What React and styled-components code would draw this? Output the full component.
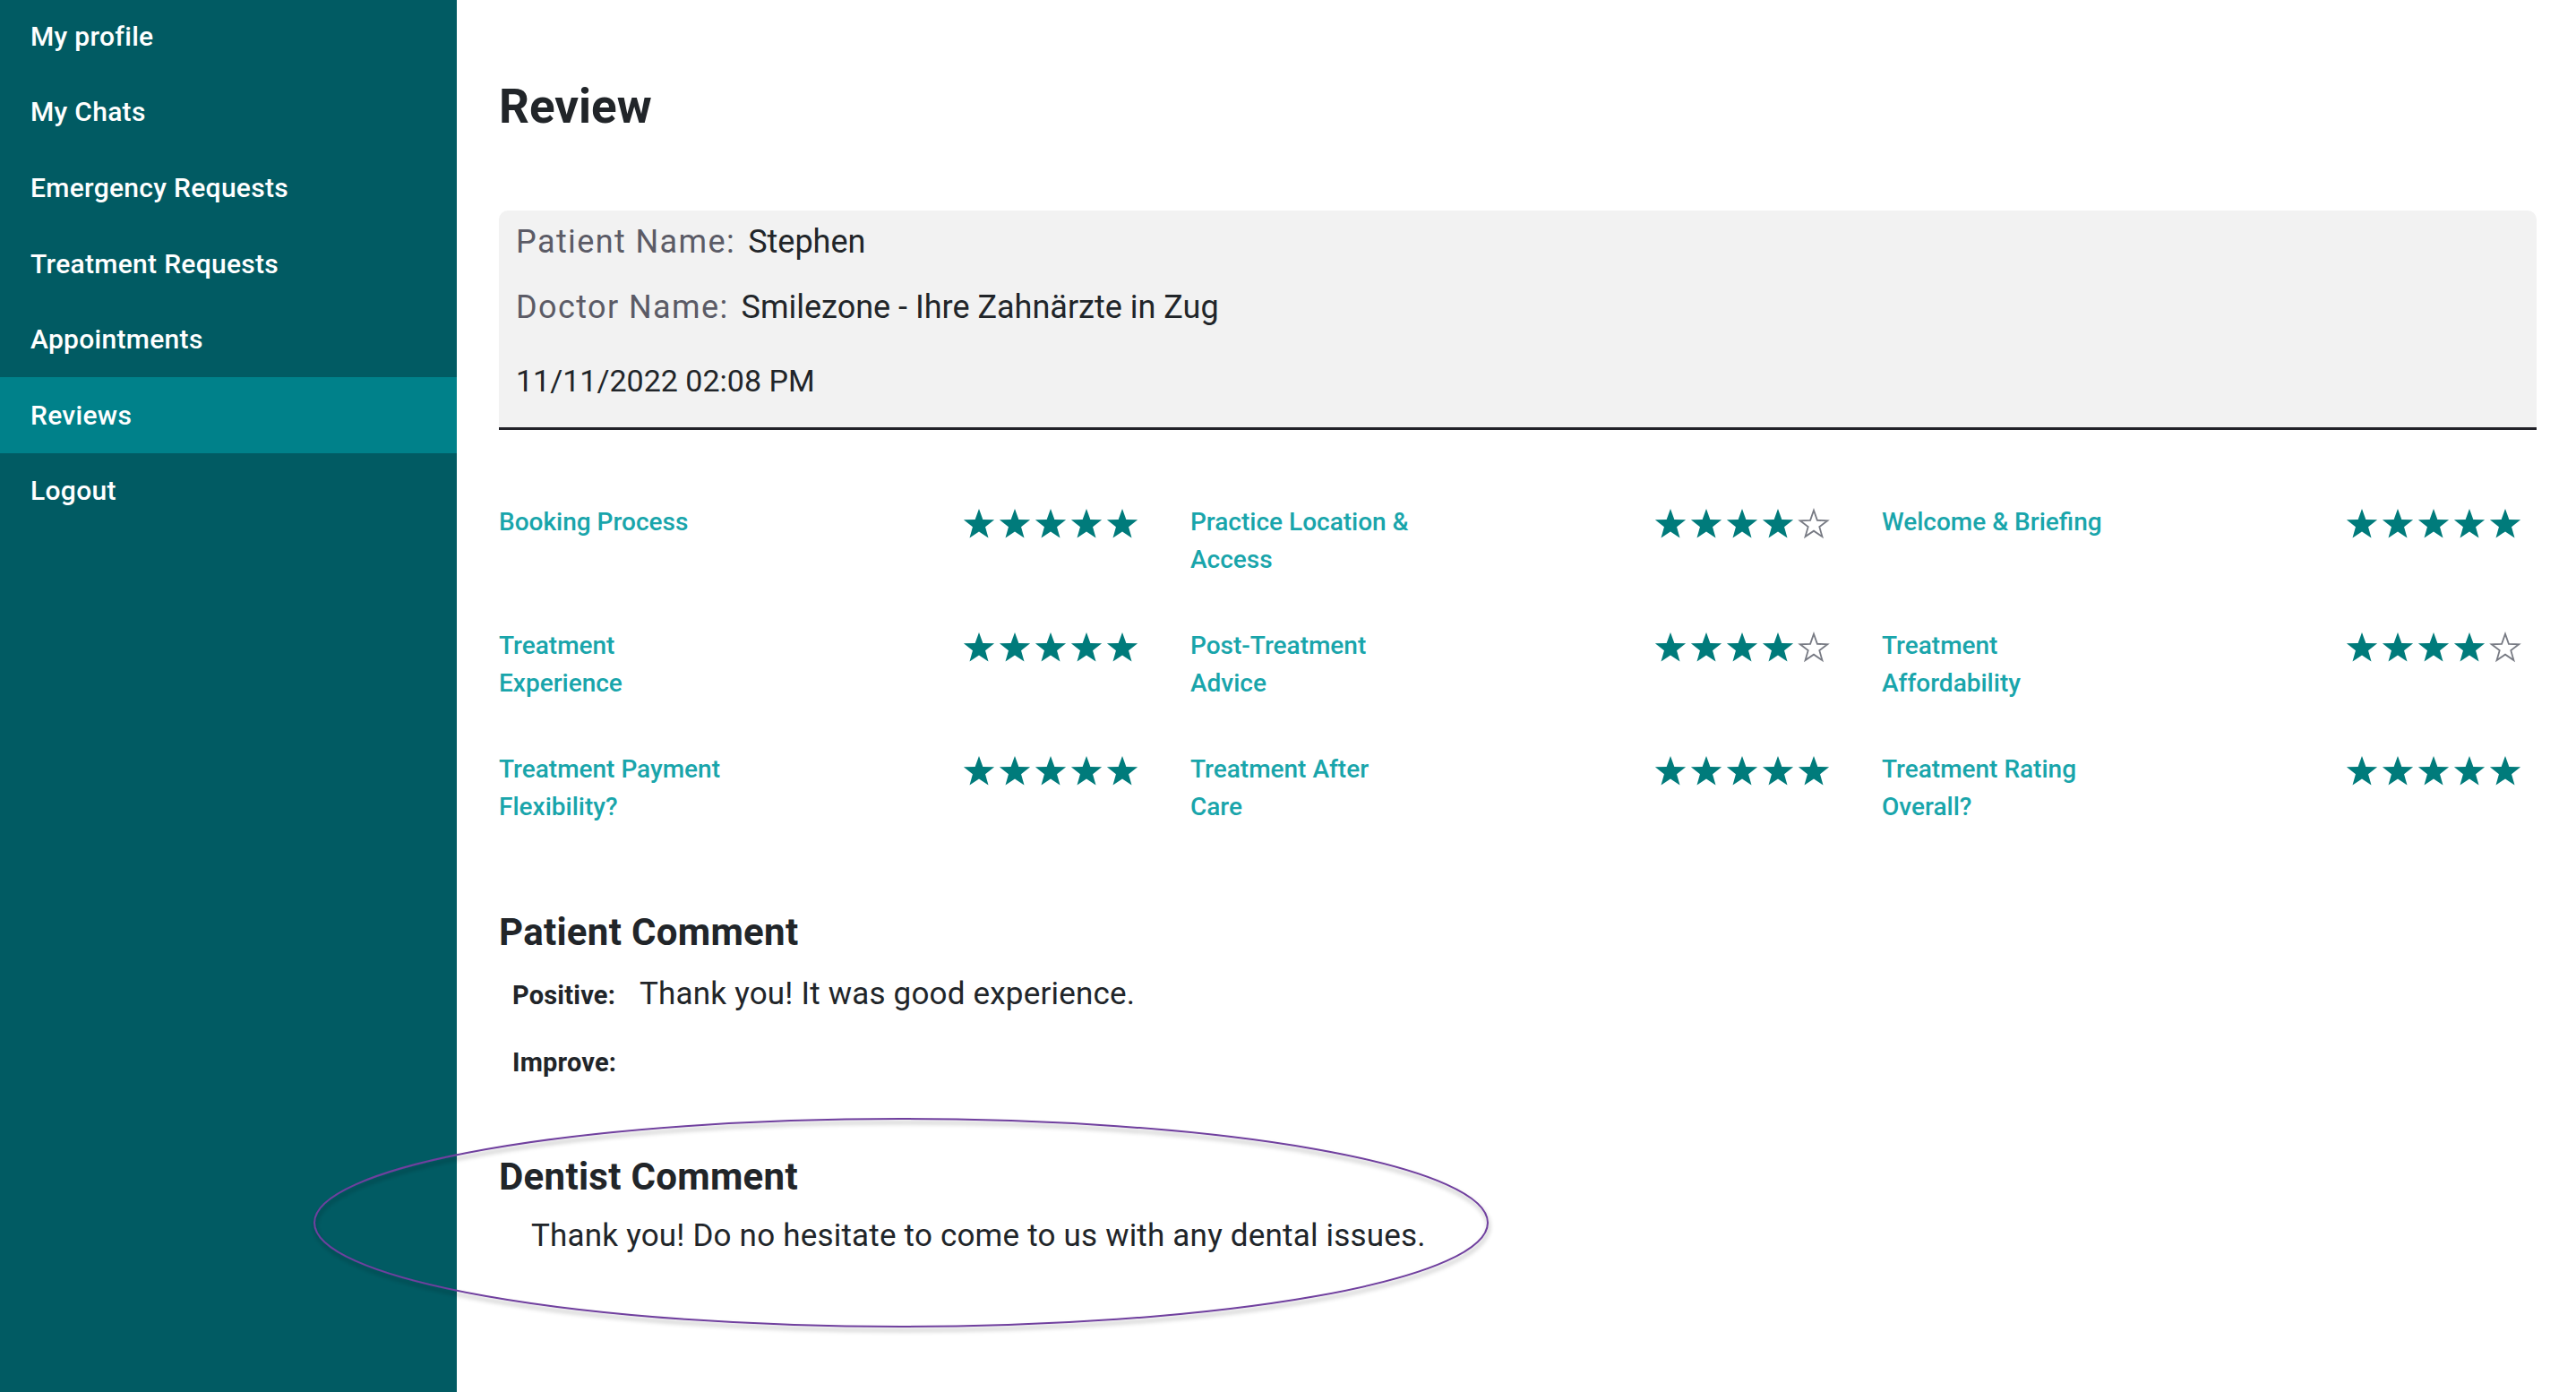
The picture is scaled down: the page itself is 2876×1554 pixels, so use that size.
import React from "react";
import styled, { createGlobalStyle } from "styled-components";

const GlobalStyle = createGlobalStyle`
  * { box-sizing: border-box; }
  body {
    margin: 0;
    background: #ffffff;
    font-family: Roboto, "Liberation Sans", sans-serif;
    color: #212529;
  }
`;

const Page = styled.div`
  position: relative;
  display: flex;
  min-height: 1554px;
  overflow: hidden;
`;

const Sidebar = styled.nav`
  width: 510px;
  flex-shrink: 0;
  background: #015b63;
`;

const NavList = styled.ul`
  list-style: none;
  margin: -2px 0 0;
  padding: 0;
`;

const NavItem = styled.li`
  height: 84.6px;
  display: flex;
  align-items: center;
  padding-left: 34px;
  font-size: 30px;
  font-weight: 500;
  letter-spacing: 0.3px;
  color: #ffffff;
  background: ${(p) => (p.$active ? "#00818a" : "transparent")};
`;

const Main = styled.main`
  flex: 1;
  padding: 0 44px 0 47px;
`;

const Title = styled.h1`
  margin: 89px 0 0;
  font-size: 53px;
  line-height: 60px;
  font-weight: 700;
  color: #212529;
`;

const InfoCard = styled.section`
  margin-top: 86px;
  background: #f2f2f2;
  border-radius: 10px 10px 0 0;
  border-bottom: 3px solid #222229;
  padding: 14px 19px 31px;
`;

const InfoRow = styled.div`
  display: flex;
  align-items: baseline;
  gap: 14px;
  font-size: ${(p) => p.$size || 36}px;
  line-height: 42px;
  margin-top: ${(p) => p.$gap || 0}px;
`;

const InfoLabel = styled.span`
  color: #5b5b66;
  letter-spacing: 1.4px;
`;

const InfoValue = styled.span`
  color: #212529;
`;

const RatingGrid = styled.div`
  margin-top: 82px;
  display: grid;
  grid-template-columns: repeat(3, 1fr);
  column-gap: 41px;
  row-gap: 54px;
`;

const RatingItem = styled.div`
  display: flex;
  justify-content: space-between;
  align-items: flex-start;
  padding-right: 17px;
`;

const RatingLabel = styled.div`
  font-size: 28px;
  line-height: 42px;
  font-weight: 500;
  color: #19a5ab;
  white-space: pre-line;
  min-height: 84px;
`;

const Stars = styled.div`
  display: flex;
  align-items: center;
  gap: 4px;
  height: 42px;
  margin-top: 2px;
`;

const SectionTitle = styled.h2`
  margin: ${(p) => p.$top}px 0 0;
  font-size: 42px;
  line-height: 50px;
  font-weight: 700;
  letter-spacing: 0.3px;
  color: #212529;
`;

const CommentRow = styled.div`
  display: flex;
  align-items: baseline;
  min-height: 42px;
  padding-left: 15px;
  margin-top: ${(p) => p.$top}px;
`;

const CommentLabel = styled.span`
  width: 142px;
  flex-shrink: 0;
  font-size: 29px;
  font-weight: 700;
  line-height: 42px;
  letter-spacing: 0.2px;
  color: #212529;
`;

const CommentText = styled.span`
  font-size: 35px;
  line-height: 42px;
  letter-spacing: 0.2px;
  color: #212529;
`;

const DentistText = styled.p`
  margin: 20px 0 0;
  padding-left: 36px;
  font-size: 35px;
  line-height: 42px;
  letter-spacing: 0.2px;
  color: #212529;
`;

const Annotation = styled.svg`
  position: absolute;
  left: 330px;
  top: 1230px;
  width: 1360px;
  height: 290px;
  pointer-events: none;
  overflow: visible;
`;

const STAR = "12,0.6 14.9,8.6 23.4,8.9 16.7,14.1 19,22.4 12,17.6 5,22.4 7.3,14.1 0.6,8.9 9.1,8.6";

const Star = ({ filled }) => (
  <svg width="36" height="36" viewBox="0 0 24 24">
    {filled ? (
      <polygon points={STAR} fill="#007b7b" />
    ) : (
      <polygon
        points="12,1.8 14.6,9.2 22.2,9.5 16.2,14.1 18.3,21.4 12,17.1 5.7,21.4 7.8,14.1 1.8,9.5 9.4,9.2"
        fill="none"
        stroke="#777a83"
        strokeWidth="1.2"
      />
    )}
  </svg>
);

const Rating = ({ value }) => (
  <Stars>
    {[1, 2, 3, 4, 5].map((n) => (
      <Star key={n} filled={n <= value} />
    ))}
  </Stars>
);

const menu = [
  "My profile",
  "My Chats",
  "Emergency Requests",
  "Treatment Requests",
  "Appointments",
  "Reviews",
  "Logout",
];

const ratings = [
  { label: "Booking Process", value: 5 },
  { label: "Practice Location &\nAccess", value: 4 },
  { label: "Welcome & Briefing", value: 5 },
  { label: "Treatment\nExperience", value: 5 },
  { label: "Post-Treatment\nAdvice", value: 4 },
  { label: "Treatment\nAffordability", value: 4 },
  { label: "Treatment Payment\nFlexibility?", value: 5 },
  { label: "Treatment After\nCare", value: 5 },
  { label: "Treatment Rating\nOverall?", value: 5 },
];

const App = () => {
  return (
    <Page>
      <GlobalStyle />
      <Sidebar>
        <NavList>
          {menu.map((item) => (
            <NavItem key={item} $active={item === "Reviews"}>
              {item}
            </NavItem>
          ))}
        </NavList>
      </Sidebar>
      <Main>
        <Title>Review</Title>
        <InfoCard>
          <InfoRow>
            <InfoLabel>Patient Name:</InfoLabel>
            <InfoValue>Stephen</InfoValue>
          </InfoRow>
          <InfoRow $gap={31}>
            <InfoLabel>Doctor Name:</InfoLabel>
            <InfoValue>Smilezone - Ihre Zahnärzte in Zug</InfoValue>
          </InfoRow>
          <InfoRow $gap={40} $size={34}>
            <InfoValue>11/11/2022 02:08 PM</InfoValue>
          </InfoRow>
        </InfoCard>

        <RatingGrid>
          {ratings.map((r) => (
            <RatingItem key={r.label}>
              <RatingLabel>{r.label}</RatingLabel>
              <Rating value={r.value} />
            </RatingItem>
          ))}
        </RatingGrid>

        <SectionTitle $top={94}>Patient Comment</SectionTitle>
        <CommentRow $top={23}>
          <CommentLabel>Positive:</CommentLabel>
          <CommentText>Thank you! It was good experience.</CommentText>
        </CommentRow>
        <CommentRow $top={33}>
          <CommentLabel>Improve:</CommentLabel>
          <CommentText></CommentText>
        </CommentRow>

        <SectionTitle $top={82}>Dentist Comment</SectionTitle>
        <DentistText>
          Thank you! Do no hesitate to come to us with any dental issues.
        </DentistText>
      </Main>

      <Annotation viewBox="0 0 1360 290">
        <defs>
          <filter id="ringShadow" x="-10%" y="-30%" width="120%" height="160%">
            <feDropShadow dx="1" dy="4" stdDeviation="2.5" floodColor="#000" floodOpacity="0.35" />
          </filter>
        </defs>
        <ellipse
          cx="676"
          cy="135"
          rx="655"
          ry="116"
          fill="none"
          stroke="#6f3f9e"
          strokeWidth="2"
          filter="url(#ringShadow)"
        />
      </Annotation>
    </Page>
  );
};

export default App;
